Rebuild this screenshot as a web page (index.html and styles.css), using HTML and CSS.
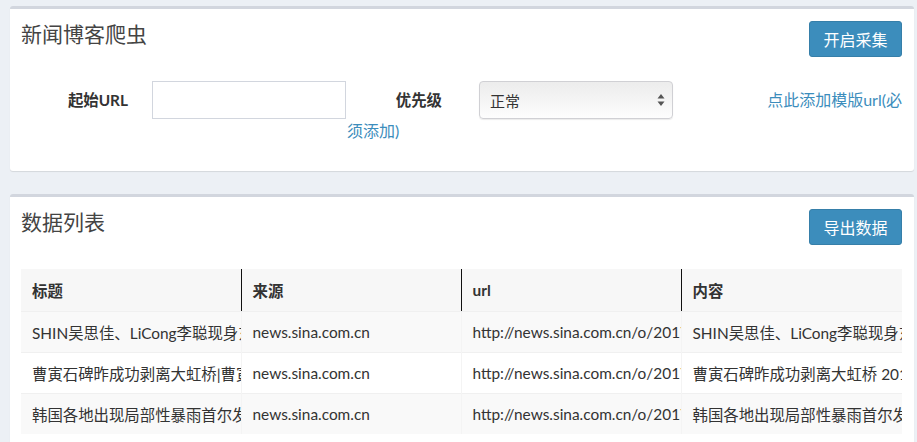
FILE: index.html
```html
<!DOCTYPE html>
<html lang="zh-CN">
<head>
<meta charset="utf-8">
<title>新闻博客爬虫</title>
<link rel="stylesheet" href="styles.css">
</head>
<body>
<div class="page">
  <section class="box box-crawl">
    <div class="box-header">
      <h3 class="box-title">新闻博客爬虫</h3>
      <button class="btn">开启采集</button>
    </div>
    <form class="crawl-form">
      <label class="form-label label-url">起始URL</label>
      <input class="form-input" type="text">
      <label class="form-label label-priority">优先级</label>
      <div class="select-wrap">
        <select class="form-select">
          <option>正常</option>
        </select>
        <svg class="select-arrows" width="8" height="14" viewBox="0 0 8 14"><path d="M4 1 L7.5 5.5 H0.5 Z M4 13 L7.5 8.5 H0.5 Z" fill="#555"/></svg>
      </div>
      <a class="tpl-link tpl-link-1" href="#">点此添加模版url(必</a>
      <a class="tpl-link tpl-link-2" href="#">须添加)</a>
    </form>
  </section>

  <section class="box box-data">
    <div class="box-header">
      <h3 class="box-title">数据列表</h3>
      <button class="btn">导出数据</button>
    </div>
    <div class="table-wrap">
      <table class="data-table">
        <colgroup><col class="c"><col class="c"><col class="c"><col class="c-last"></colgroup>
        <thead>
          <tr><th>标题</th><th>来源</th><th>url</th><th class="last">内容</th></tr>
        </thead>
        <tbody>
          <tr><td>SHIN吴思佳、LiCong李聪现身东方风云榜</td><td>news.sina.com.cn</td><td>http://news.sina.com.cn/o/2017-07-21/doc.shtml</td><td>SHIN吴思佳、LiCong李聪现身东方风云榜</td></tr>
          <tr><td>曹寅石碑昨成功剥离大虹桥|曹寅</td><td>news.sina.com.cn</td><td>http://news.sina.com.cn/o/2017-07-21/doc.shtml</td><td>曹寅石碑昨成功剥离大虹桥 2017</td></tr>
          <tr><td>韩国各地出现局部性暴雨首尔发布</td><td>news.sina.com.cn</td><td>http://news.sina.com.cn/o/2017-07-21/doc.shtml</td><td>韩国各地出现局部性暴雨首尔发布</td></tr>
        </tbody>
      </table>
    </div>
  </section>
</div>
</body>
</html>
```
FILE: styles.css
```css
html, body {
  margin: 0;
  padding: 0;
  background: #ecf0f5;
  font-family: "Lato", "Noto Sans CJK SC", sans-serif;
  color: #333;
  font-size: 15.4px;
  overflow: hidden;
}

.page {
  padding: 6px 3px 0 10px;
}

.box {
  background: #fff;
  border-top: 3px solid #d2d6de;
  border-radius: 3px;
  box-shadow: 0 1px 1px rgba(0, 0, 0, 0.1);
}

.box-crawl {
  margin-bottom: 23px;
  padding-bottom: 31px;
}

.box-data {
  padding-bottom: 20px;
}

.box-header {
  display: flex;
  justify-content: space-between;
  align-items: flex-start;
  padding: 12px 12px 0 11px;
}

.box-title {
  margin: 0;
  font-family: "Noto Sans CJK SC", sans-serif;
  font-size: 21px;
  font-weight: 400;
  line-height: 24px;
  color: #444;
}

.btn {
  width: 93px;
  height: 36px;
  background: #3c8dbc;
  border: 1px solid #367fa9;
  border-radius: 3px;
  color: #fff;
  font-family: "Noto Sans CJK SC", sans-serif;
  font-size: 16px;
  padding: 0;
  cursor: pointer;
}

.crawl-form {
  display: grid;
  grid-template-columns: 142px 194px 133px 194px 1fr;
  grid-template-rows: 38px 21px;
  align-items: center;
  margin-top: 24px;
  padding-right: 12px;
}

.form-label {
  font-weight: 700;
  text-align: right;
  line-height: 20px;
}

.label-url {
  padding-right: 24px;
}

.label-priority {
  padding-right: 37px;
}

.form-input {
  box-sizing: border-box;
  width: 194px;
  height: 38px;
  border: 1px solid #d2d6de;
  border-radius: 0;
  margin: 0;
  padding: 6px 12px;
  font-family: inherit;
  font-size: 15px;
}

.select-wrap {
  position: relative;
  width: 194px;
  height: 38px;
}

.form-select {
  appearance: none;
  -webkit-appearance: none;
  box-sizing: border-box;
  width: 194px;
  height: 38px;
  margin: 0;
  padding: 0 10px;
  border: 1px solid #d0d0d4;
  border-radius: 4px;
  background: linear-gradient(#ececec, #fdfdfd);
  box-shadow: 0 1px 1px rgba(0, 0, 0, 0.08);
  font-family: "Noto Sans CJK SC", sans-serif;
  font-size: 15px;
  color: #333;
}

.select-arrows {
  position: absolute;
  right: 8px;
  top: 12px;
}

.tpl-link {
  color: #3c8dbc;
  text-decoration: none;
  white-space: nowrap;
  font-size: 16px;
  line-height: 20px;
}

.tpl-link-1 {
  text-align: right;
}

.tpl-link-2 {
  grid-column: 3;
  grid-row: 2;
  padding-left: 1px;
  margin-top: 2px;
}

.table-wrap {
  padding: 24px 12px 0 11px;
}

.data-table {
  width: 881px;
  table-layout: fixed;
  border-collapse: collapse;
  font-size: 15.4px;
}

.data-table col.c {
  width: 220px;
}

.data-table th,
.data-table td {
  white-space: nowrap;
  overflow: hidden;
  text-align: left;
  padding: 0 0 0 11px;
  border-right: 1px solid #f4f4f4;
}

.data-table th {
  height: 42px;
  font-weight: 700;
  background: #f7f7f7;
  border-right: 1px solid #111;
  border-bottom: 1px solid #f0f0f0;
}

.data-table th.last,
.data-table td:last-child {
  border-right: none;
}

.data-table td {
  height: 40px;
  border-top: 1px solid #f0f0f0;
}

.data-table tbody tr:nth-child(odd) td {
  background: #f9f9f9;
}
```
